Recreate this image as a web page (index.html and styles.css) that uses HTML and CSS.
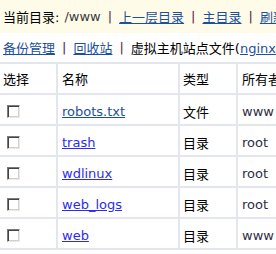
FILE: index.html
```html
<!DOCTYPE html>
<html lang="zh-CN">
<head>
<meta charset="utf-8">
<title>文件管理</title>
<link rel="stylesheet" href="styles.css">
</head>
<body>
<div class="page">
  <div class="pathbar">
    <span class="label">当前目录:</span>
    <span class="path">/www</span>
    <span class="sep">|</span>
    <a class="nav" href="#">上一层目录</a>
    <span class="sep">|</span>
    <a class="nav" href="#">主目录</a>
    <span class="sep">|</span>
    <a class="nav" href="#">刷新</a>
  </div>
  <div class="toolbar">
    <a class="nav" href="#">备份管理</a>
    <span class="sep">|</span>
    <a class="nav" href="#">回收站</a>
    <span class="sep">|</span>
    <span class="label">虚拟主机站点文件(<a class="nav" href="#">nginx</a>,<a class="nav" href="#">apache</a>)</span>
  </div>
  <table class="files">
    <colgroup>
      <col class="w-sel">
      <col class="w-name">
      <col class="w-type">
      <col class="w-owner">
      <col class="w-perm">
      <col class="w-size">
    </colgroup>
    <thead>
      <tr>
        <th class="c-sel">选择</th>
        <th>名称</th>
        <th class="c-type">类型</th>
        <th>所有者</th>
        <th>权限</th>
        <th>大小</th>
      </tr>
    </thead>
    <tbody>
      <tr>
        <td class="c-sel"><input class="chk" type="checkbox"></td>
        <td><a class="file dark" href="#">robots.txt</a></td>
        <td class="c-type">文件</td>
        <td><span class="muted">www</span></td>
        <td>644</td>
        <td>0</td>
      </tr>
      <tr>
        <td class="c-sel"><input class="chk" type="checkbox"></td>
        <td><a class="file" href="#">trash</a></td>
        <td class="c-type">目录</td>
        <td><span class="muted">root</span></td>
        <td>755</td>
        <td>-</td>
      </tr>
      <tr>
        <td class="c-sel"><input class="chk" type="checkbox"></td>
        <td><a class="file" href="#">wdlinux</a></td>
        <td class="c-type">目录</td>
        <td><span class="muted">root</span></td>
        <td>755</td>
        <td>-</td>
      </tr>
      <tr>
        <td class="c-sel"><input class="chk" type="checkbox"></td>
        <td><a class="file" href="#">web_logs</a></td>
        <td class="c-type">目录</td>
        <td><span class="muted">root</span></td>
        <td>755</td>
        <td>-</td>
      </tr>
      <tr>
        <td class="c-sel"><input class="chk" type="checkbox"></td>
        <td><a class="file" href="#">web</a></td>
        <td class="c-type">目录</td>
        <td><span class="muted">www</span></td>
        <td>755</td>
        <td>-</td>
      </tr>
    </tbody>
  </table>
</div>
</body>
</html>
```
FILE: styles.css
```css
html, body {
  margin: 0;
  padding: 0;
  overflow: hidden;
  background: #ffffff;
}

body {
  font-family: "DejaVu Sans", "Noto Sans CJK SC", sans-serif;
  font-size: 13px;
  color: #000;
}

.page {
  width: 276px;
  height: 254px;
  overflow: hidden;
}

.pathbar,
.toolbar {
  display: flex;
  align-items: center;
  white-space: nowrap;
  padding-left: 3px;
}

.pathbar {
  height: 33px;
  background: #fefce8;
}

.toolbar {
  height: 29px;
  background: #ffffff;
}

.path {
  color: #3a3a3a;
  margin-left: 5px;
}

.sep {
  color: #5c1a3c;
  padding: 0 7px;
}

.nav {
  color: #1d4f9f;
  text-decoration: underline;
}

.files {
  table-layout: fixed;
  width: 418px;
  border-collapse: separate;
  border-spacing: 0;
  white-space: nowrap;
}

.w-sel { width: 58px; }
.w-name { width: 122px; }
.w-type { width: 58px; }
.w-owner { width: 80px; }
.w-perm { width: 50px; }
.w-size { width: 50px; }

.files th,
.files td {
  padding: 0 0 0 4px;
  overflow: hidden;
  text-align: left;
  vertical-align: middle;
  font-weight: normal;
  border-right: 2px solid #e3e6ed;
  border-bottom: 2px solid #e3e6ed;
}

.files th {
  height: 29px;
  border-top: 2px solid #e3e6ed;
}

.files td {
  height: 25px;
  padding-top: 4px;
}

.files .c-sel,
.files .c-type {
  padding-left: 3px;
}

.chk {
  -webkit-appearance: none;
  appearance: none;
  display: block;
  width: 13px;
  height: 13px;
  margin: 0 0 0 4px;
  box-sizing: border-box;
  background: #fff;
  border: 1px solid;
  border-color: #7c7c7c #ebe9e3 #ebe9e3 #7c7c7c;
  box-shadow: inset 1px 1px 0 #444, inset -1px -1px 0 #d4d0c8;
}

.file {
  color: #2b2bf2;
  text-decoration: underline;
}

.file.dark {
  color: #1d4f9f;
}

.muted {
  color: #2e2e44;
}
```
